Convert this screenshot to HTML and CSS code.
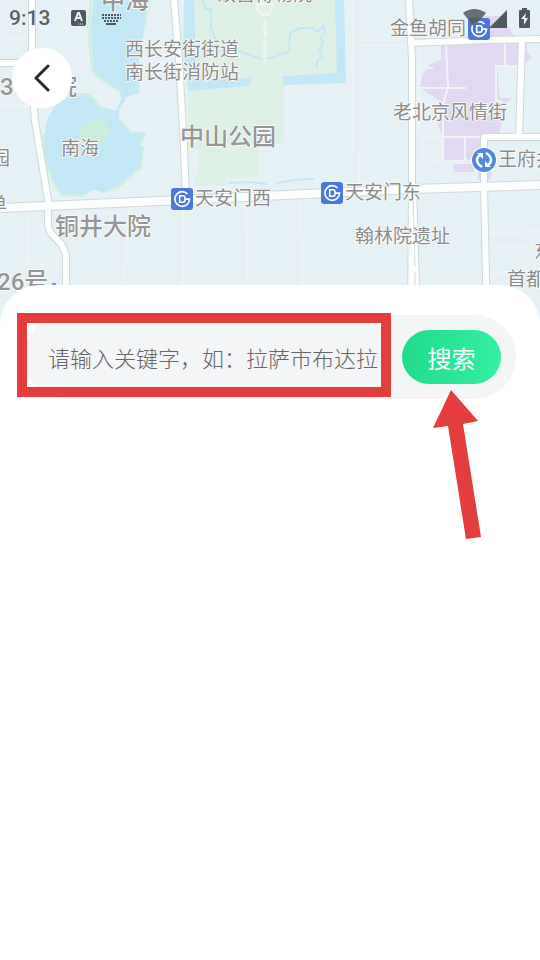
FILE: index.html
```html
<!DOCTYPE html>
<html lang="zh-CN">
<head>
    <meta charset="UTF-8">
    <meta name="viewport" content="width=device-width, initial-scale=1.0">
    <title>地点搜索</title>
    <link rel="stylesheet" href="styles.css">
</head>
<body>
    <header class="map">
        <svg class="map-canvas" viewBox="0 0 540 325" preserveAspectRatio="xMidYMid slice" role="img" aria-label="地图">
            <defs>
                <g id="metro">
                    <rect width="22" height="22" rx="3" fill="#4a78de"/>
                    <path d="M16.5 6A7.3 7.3 0 1 0 16.5 16Q18.3 14 18.5 11.2H14" fill="none" stroke="#fff" stroke-width="1.7"/>
                    <path d="M8.7 7.8h3q2.3 0 2.3 2.2v2q0 2.2-2.3 2.2H8.7z" fill="none" stroke="#fff" stroke-width="1.6"/>
                </g>
            </defs>

            <!-- parks -->
            <path class="park" d="M184 0H338V76L284 78V142L287 143L259 144V177L226 179V186H193L199 166V150L188 148V90L180 60z"/>
            <path class="park" d="M91 0L88 24L91 70L96 76L116 89L121 97L139 94V50L146 28L153 0z"/>

            <!-- water -->
            <path class="water" d="M94 0L90 27L94 70L100 77L122 92L122 97L116 111L102 107L93 98L84 95L70 96L55 106L47 120L43 140L46 163L54 184L62 194L84 195L94 190L102 192L117 186L141 166L144 147L140 144L144 132L133 133L124 125L119 118L119 111L126 97L139 93V45L143 38L148 0z"/>
            <path class="land" d="M98 77L121 92L122 97L116 110L108 106L99 98L94 96L88 93L80 92z"/>
            <path class="shore" d="M91 0L88 27L92 70L98 77L121 92L121 97M68 95L88 94L94 99L99 107L109 113M119 118L130 132L145 134L141 144M43 134L46 163L54 184L62 195L84 196M101 193L117 188L141 167L143 147"/>
            <path class="island" d="M80 130L89 122L96 120L98 117L108 125L110 132L104 141L97 148L80 145z"/>
            <path class="water" d="M184 0H194L196 79L250 78V86L188 91L184 56z"/>
            <path class="water" d="M335 0H344L346 83L283 85V76L337 73z"/>
            <path class="stream" d="M202 0L206 9H211V28L216 40L217 51H240L250 55L262 59L275 57L279 54L289 52L290 33L300 28H313L317 32L324 26L325 32L321 37L323 43L319 51L323 57L317 61V67"/>
            <path class="stream" d="M228 183L250 182L266 184M277 183L294 180L314 179"/>
            <path class="axis" d="M257 4V9L261 14H268L272 9V4z"/>
            <path class="axis" d="M265 19V38M265 40V50M265 50V62"/>

            <!-- shopping blocks -->
            <path class="mall" d="M482 16H501L512 33L527 44V52L532 57L526 63L524 66H499V90H510L512 99L502 106L500 137L485 138V157L474 161V162H443V138L438 126L447 106L420 88L422 76L430 64L441 60V43H481z"/>
            <path class="block" d="M497 66H519V98H500z"/>
            <path class="mall" d="M454 164H474V172H454zM478 172H492L490 180H478z"/>

            <!-- lanes -->
            <path class="lane" d="M0 106H31M6 38H30M446 44L448 87L443 105V162M415 88H466M419 68H433M419 44V128M422 137H482M422 137V156L430 162L484 160M465 137V160M505 42V66M519 66H496V100L518 108M360 45H408M353 0V150M29 211L27 264M20 264H61M129 205L124 284M183 208L184 273L182 285M246 203L248 285M300 197L303 285M487 234L540 231M487 248L540 246M488 273L540 270M360 150L359 185"/>

            <!-- main roads -->
            <g class="road-edge">
                <path d="M32 0L32 85L35 121L48 200V226L50 232L62 245L66 255V325"/>
                <path d="M0 63H32"/>
                <path d="M174 0L179 60L184 148L186 200"/>
                <path d="M409 0L412 60V184L411 325"/>
                <path d="M413 184L417 325"/>
                <path d="M410 43L490 40L540 39"/>
                <path d="M522 40L519 137"/>
                <path d="M484 160V137H540"/>
                <path d="M484 160V184L487 325"/>
                <path d="M0 208L182 200L412 189L540 185" class="wide"/>
            </g>
            <g class="road">
                <path d="M32 0L32 85L35 121L48 200V226L50 232L62 245L66 255V325"/>
                <path d="M0 63H32"/>
                <path d="M174 0L179 60L184 148L186 200"/>
                <path d="M409 0L412 60V184L411 325"/>
                <path d="M413 184L417 325"/>
                <path d="M410 43L490 40L540 39"/>
                <path d="M522 40L519 137"/>
                <path d="M484 160V137H540"/>
                <path d="M484 160V184L487 325"/>
                <path d="M0 208L182 200L412 189L540 185" class="wide"/>
            </g>
            <path class="lane-divider" d="M413 192L415 266M415 272V325"/>

            <!-- stations -->
            <use href="#metro" x="171" y="188"/>
            <use href="#metro" x="321" y="182"/>
            <use href="#metro" x="468" y="18"/>
            <circle cx="484" cy="160" r="13" fill="#fff"/>
            <circle cx="484" cy="160" r="12" fill="#4f88dc"/>
            <path d="M482 167Q477 164 477 160Q477 157 480 155M486 153Q491 156 491 160Q491 163 488 165" fill="none" stroke="#fff" stroke-width="2.5"/>
            <path d="M477 153H483V159zM491 167H485V161z" fill="#fff"/>

            <!-- place names -->
            <g class="place">
                <text x="217" y="1">故宫博物院</text>
                <text x="125" y="56">西长安街街道</text>
                <text x="125" y="79">南长街消防站</text>
                <text x="61" y="155">南海</text>
                <text x="-9" y="165">园</text>
                <text x="-12" y="211">单</text>
                <text x="195" y="205">天安门西</text>
                <text x="345" y="199">天安门东</text>
                <text x="355" y="243">翰林院遗址</text>
                <text x="393" y="119">老北京风情街</text>
                <text x="390" y="35">金鱼胡同</text>
                <text x="498" y="166">王府井</text>
                <text x="534" y="258">东</text>
                <text x="507" y="286">首都</text>
            </g>
            <g class="place place-large">
                <text x="101" y="9">中海</text>
                <text x="0" y="95" class="number">3</text>
                <text x="53" y="95">院</text>
                <text x="180" y="145">中山公园</text>
                <text x="55" y="235">铜井大院</text>
                <text x="-3" y="290" class="number">26号</text>
            </g>
            <path d="M52 284h4" stroke="#8a8cf0" stroke-width="2"/>
        </svg>

        <div class="status-bar">
            <span class="clock">9:13</span>
            <svg class="status-left" width="52" height="18" viewBox="0 0 52 18" aria-hidden="true">
                <rect x="1" y="1" width="15" height="16" rx="2"/>
                <path d="M5 12L8 4H9L12 12M6 9H11" fill="none" stroke="#eaf3f6" stroke-width="2"/>
                <path d="M8 15h6" stroke="#eaf3f6" stroke-dasharray="1 1"/>
                <path d="M32 6H51M32 9H51M34 12H49" fill="none" stroke="#50595d" stroke-width="2" stroke-dasharray="2 1"/>
                <path d="M36 14h10v2h-10z"/>
            </svg>
            <svg class="status-right" width="68" height="20" viewBox="0 0 68 20" aria-hidden="true">
                <path d="M0 5Q11 -3 23 5L11 19z" opacity=".85"/>
                <path d="M44 2V20H26z"/>
                <path d="M59 2V0h5v2h2q1 0 1 1v16q0 1-1 1h-9q-1 0-1-1V3q0-1 1-1z"/>
                <path d="M63 5L58 11H61V17L65 10H62z" fill="#eaf3f6"/>
            </svg>
        </div>

        <button class="back" type="button" aria-label="返回">
            <svg width="16" height="28" viewBox="0 0 16 28" aria-hidden="true">
                <path d="M14 2L2 14L14 26" fill="none" stroke="#2b2b2b" stroke-width="3" stroke-linecap="round" stroke-linejoin="round"/>
            </svg>
        </button>
    </header>

    <main class="sheet">
        <form class="search">
            <input class="search-input" type="text" aria-label="关键字" placeholder="请输入关键字，如：拉萨市布达拉">
            <button class="search-button" type="button">搜索</button>
            <div class="highlight"></div>
            <svg class="arrow" width="48" height="150" viewBox="0 0 48 150" aria-hidden="true">
                <path d="M18 0L45 31L30 34L48 147L33 149L15 36L0 38z" fill="#e43d3d"/>
            </svg>
        </form>
    </main>
</body>
</html>
```

FILE: styles.css
```css
* {
    box-sizing: border-box;
}

body {
    margin: 0;
    min-height: 100vh;
    background: #fff;
    font-family: Roboto, "Noto Sans CJK SC", sans-serif;
}

button,
input {
    margin: 0;
    padding: 0;
    border: none;
    font-family: inherit;
}

/* Map */
.map {
    position: relative;
}

.map-canvas {
    display: block;
    width: 100%;
    height: 325px;
    background: #e6f1f6;
}

.park { fill: #ddf0e6; }
.island { fill: #c9eedc; }
.water { fill: #c2e7f7; }
.mall { fill: #e1d9f3; }
.land,
.block { fill: #e6f1f6; }

.shore,
.stream,
.axis,
.lane,
.lane-divider,
.road,
.road-edge {
    fill: none;
    stroke-linejoin: round;
}

.shore {
    stroke: #cdeedd;
    stroke-width: 2;
}

.stream {
    stroke: #c2e7f7;
    stroke-width: 2;
}

.axis {
    stroke: #eff3ef;
    stroke-width: 3;
}

.lane {
    stroke: #eff3f3;
    stroke-width: 2;
}

.lane-divider {
    stroke: #d3dada;
    stroke-width: 1;
}

.road-edge {
    stroke: #d0d8d8;
    stroke-width: 8;
}

.road {
    stroke: #fcfefe;
    stroke-width: 6;
}

.road-edge .wide { stroke-width: 10; }
.road .wide { stroke-width: 8; }

.place {
    font-family: "Noto Sans CJK SC", sans-serif;
    font-size: 19px;
    font-weight: 400;
    fill: #8c8c8c;
    stroke: #f8fafa;
    stroke-width: 2px;
    stroke-linejoin: round;
    paint-order: stroke;
}

.place-large {
    font-size: 24px;
    font-weight: 500;
    fill: #969696;
}

.number {
    font-family: Roboto, "Noto Sans CJK SC", sans-serif;
}

/* Status bar */
.status-bar {
    position: absolute;
    top: 0;
    left: 0;
    right: 0;
    height: 36px;
    padding: 0 9px;
    display: flex;
    align-items: center;
    color: #596266;
    fill: #50595d;
}

.clock {
    font-size: 21px;
    font-weight: 500;
}

.status-left {
    margin-left: 20px;
}

.status-right {
    margin-left: auto;
}

.back {
    position: absolute;
    top: 48px;
    left: 12px;
    width: 60px;
    height: 60px;
    display: flex;
    align-items: center;
    justify-content: center;
    background: #fff;
    border-radius: 50%;
    cursor: pointer;
}

/* Search sheet */
.sheet {
    position: relative;
    margin-top: -40px;
    padding: 30px 24px;
    background: #fff;
    border-radius: 40px 40px 0 0;
}

.search {
    position: relative;
    display: flex;
    align-items: center;
    gap: 24px;
    padding: 15px 15px 15px 24px;
    background: #f4f5f7;
    border-radius: 42px;
}

.search-input {
    flex: 1;
    min-width: 0;
    height: 54px;
    background: none;
    color: #333;
    font-family: "Noto Sans CJK SC", sans-serif;
    font-size: 22px;
    font-weight: 300;
    outline: none;
}

.search-input::placeholder {
    color: #666;
    opacity: 1;
}

.search-button {
    width: 99px;
    height: 54px;
    border-radius: 27px;
    background: linear-gradient(90deg, #1fdb8b, #35efa2);
    color: #fff;
    font-size: 24px;
    font-weight: 400;
    cursor: pointer;
}

/* Guide marks over the form */
.highlight {
    position: absolute;
    top: -2px;
    left: -7px;
    right: 125px;
    height: 84px;
    border: 10px solid #e43d3d;
    pointer-events: none;
}

.arrow {
    position: absolute;
    top: 75px;
    right: 35px;
    pointer-events: none;
}
```
